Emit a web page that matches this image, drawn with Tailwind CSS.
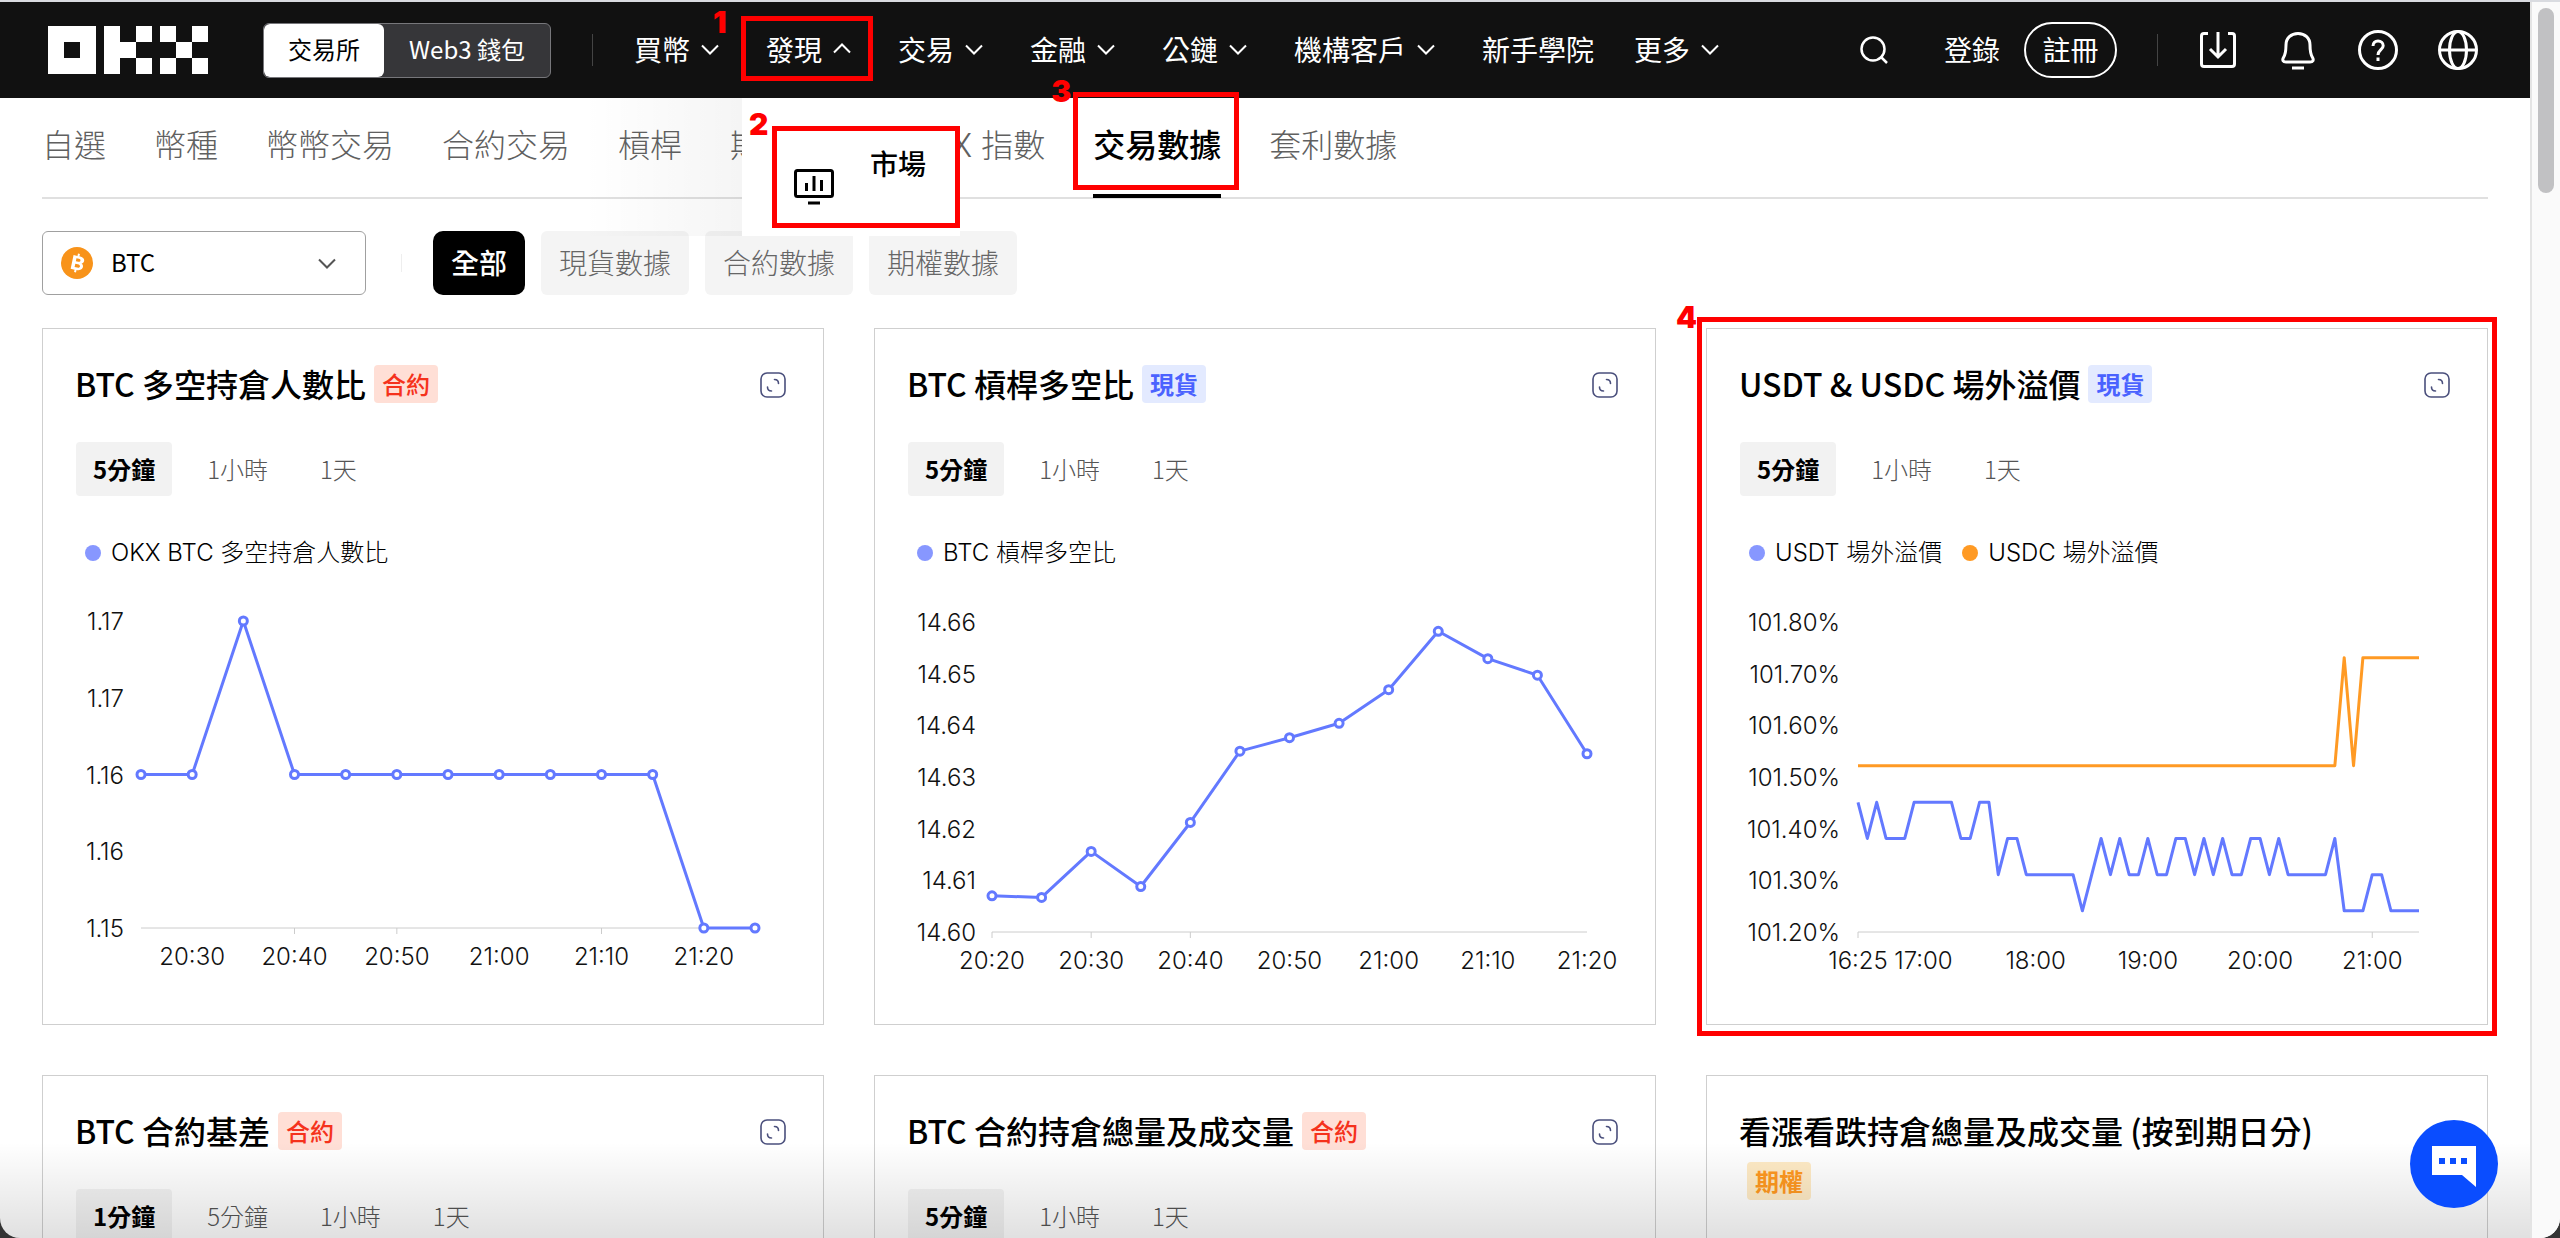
<!DOCTYPE html>
<html lang="zh-Hant">
<head>
<meta charset="utf-8">
<title>OKX 交易數據</title>
<script src="https://cdn.jsdelivr.net/npm/@tailwindcss/browser@4"></script>
</head>
<body class="bg-[#333] font-['Noto_Sans_CJK_TC',sans-serif] text-black">
<svg class="hidden" aria-hidden="true">
  <symbol id="down" viewBox="0 0 32 32"><path d="M8 12.500l8 8 8-8" fill="none" stroke="currentColor" stroke-width="2"/></symbol>
  <symbol id="expand" viewBox="0 0 26 26"><g fill="none" stroke="#4a4f7c" stroke-width="1.600" stroke-linecap="round"><rect x="1" y="1" width="24" height="24" rx="6"/><path d="M14.500 7.500c2.500 0 4 1.500 4 4M7.500 15c0 2.500 1.500 4 4 4"/></g></symbol>
</svg>
<div class="flex h-screen overflow-hidden rounded-b-[20px] border-t-2 border-[#d9dbe0] bg-white">
  <div class="relative min-w-0 flex-1 overflow-hidden">

    <header class="relative z-20 flex h-24 items-center bg-[#111] pl-12 pr-[52px] text-[28px] leading-10 text-white">
      <a href="#" aria-label="OKX" class="shrink-0">
        <svg class="h-12 w-40" viewBox="0 0 160 48" fill="#fff" shape-rendering="crispEdges"><path fill-rule="evenodd" d="M0 0h48v48H0zM16 16v16h16V16z"/><path d="M56 0h16v16h16v16H72v16H56zM88 0h16v16H88zM88 32h16v16H88zM112 0h16v16h-16zM144 0h16v16h-16zM128 16h16v16h-16zM112 32h16v16h-16zM144 32h16v16h-16z"/></svg>
      </a>
      <div class="ml-[55px] flex h-[55px] shrink-0 overflow-hidden rounded-md border border-[#77777b] bg-[#363639] text-2xl">
        <button class="w-[120px] rounded-md bg-white pb-0.5 text-black">交易所</button>
        <button class="w-[166px] pb-0.5">Web3 錢包</button>
      </div>
      <div class="ml-[41px] h-8 w-px shrink-0 bg-[#444]"></div>
      <nav class="ml-[41px] h-full">
        <ul class="flex h-full items-center gap-10 whitespace-nowrap pb-0.5">
          <li><a href="#" class="flex items-center gap-1">買幣<svg class="size-8"><use href="#down"/></svg></a></li>
          <li class="relative flex h-full items-center">
            <a href="#" class="flex items-center gap-1">發現<svg class="size-8 rotate-180"><use href="#down"/></svg></a>
            <div class="pointer-events-none absolute -left-[25px] -right-[15px] bottom-[15px] top-3.5 border-[5px] border-[#f00]"></div>
            <b class="absolute -left-[53px] top-0 font-['Inter',sans-serif] text-[30px] font-black text-[#f00]">1</b>
            <div class="absolute -left-6 top-24 h-[138px] w-[218px] bg-white text-black">
              <div class="absolute right-full top-0 h-full w-40 bg-gradient-to-r from-transparent to-black/4"></div>
              <b class="absolute left-[7px] top-1.5 font-['Inter',sans-serif] text-[30px] font-black text-[#f00]">2</b>
              <a href="#" class="ml-[30px] mt-7 flex h-[102px] items-center border-[5px] border-[#f00] pl-[17px] font-medium">
                <svg class="mt-5 h-9 w-10" viewBox="0 0 40 36" fill="none" stroke="#000" stroke-width="3"><rect x="1.500" y="1.500" width="37" height="26" rx="2"/><path d="M12.500 14v8M20 7v15M27.500 11v11M14 34h12"/></svg>
                <span class="-mt-7 ml-9">市場</span>
              </a>
            </div>
          </li>
          <li><a href="#" class="flex items-center gap-1">交易<svg class="size-8"><use href="#down"/></svg></a></li>
          <li><a href="#" class="flex items-center gap-1">金融<svg class="size-8"><use href="#down"/></svg></a></li>
          <li><a href="#" class="flex items-center gap-1">公鏈<svg class="size-8"><use href="#down"/></svg></a></li>
          <li><a href="#" class="flex items-center gap-1">機構客戶<svg class="size-8"><use href="#down"/></svg></a></li>
          <li><a href="#">新手學院</a></li>
          <li><a href="#" class="flex items-center gap-1">更多<svg class="size-8"><use href="#down"/></svg></a></li>
        </ul>
      </nav>
      <div class="ml-auto flex shrink-0 items-center">
        <button aria-label="搜尋"><svg class="size-7" viewBox="0 0 28 28" fill="none" stroke="#fff" stroke-width="2.500"><circle cx="13" cy="13" r="11.500"/><path d="M20.500 20.500L27 27"/></svg></button>
        <a href="#" class="ml-14 pb-0.5">登錄</a>
        <a href="#" class="ml-6 flex h-14 w-[93px] items-center justify-center rounded-full border-2 border-white pb-0.5">註冊</a>
        <div class="ml-10 h-8 w-px bg-[#444]"></div>
        <div class="ml-10 flex gap-10">
          <button aria-label="下載"><svg class="size-10" viewBox="0 0 40 40" fill="none" stroke="#fff" stroke-width="3"><path d="M10 3.500H6a2.500 2.500 0 0 0-2.500 2.500v28A2.500 2.500 0 0 0 6 36.500h28a2.500 2.500 0 0 0 2.500-2.500V6A2.500 2.500 0 0 0 34 3.500h-4M20 2v24M12 19l8 8 8-8"/></svg></button>
          <button aria-label="通知"><svg class="size-10" viewBox="0 0 40 40" fill="none" stroke="#fff" stroke-width="3"><path d="M8 32h24c3 0 4-2 2.500-4.500C33 25 32 22 32 15 32 8 27 3.500 20 3.500S8 8 8 15c0 7-1 10-2.500 12.500C4 30 5 32 8 32zM14 38h12"/></svg></button>
          <button aria-label="說明"><svg class="size-10" viewBox="0 0 40 40" fill="none" stroke="#fff" stroke-width="3"><circle cx="20" cy="20" r="18.500"/><path d="M15 16c0-3 2-5 5-5s5.200 2 5.200 4.700C25.200 19.500 20 20 20 25"/><path d="M20 27.500v3.500"/></svg></button>
          <button aria-label="語言"><svg class="size-10" viewBox="0 0 40 40" fill="none" stroke="#fff" stroke-width="3"><circle cx="20" cy="20" r="18.500"/><ellipse cx="20" cy="20" rx="8.500" ry="18.500"/><path d="M1.500 20h37"/></svg></button>
        </div>
      </div>
    </header>

    <main class="px-[42px]">
      <nav class="flex h-[101px] items-start gap-12 whitespace-nowrap border-b-2 border-[#e0e0e0] pt-[21px] text-[32px] font-light leading-[48px] text-[#606060]">
        <a href="#">自選</a><a href="#">幣種</a><a href="#">幣幣交易</a><a href="#">合約交易</a><a href="#">槓桿</a><a href="#">期權交易</a><a href="#"><span class="font-['Inter',sans-serif]">OKX </span>指數</a>
        <a href="#" class="relative z-30 h-[79px] border-b-4 border-black font-medium text-black">交易數據
          <span class="pointer-events-none absolute -left-5 -top-[27px] h-[98px] w-[166px] border-[5px] border-[#f00]"></span>
          <b class="absolute -left-[42px] -top-[52px] font-['Inter',sans-serif] text-[30px] font-black text-[#f00]">3</b>
        </a>
        <a href="#">套利數據</a>
      </nav>

      <div class="mt-8 flex h-16 items-center text-[28px] font-light text-[#666]">
        <div class="relative h-16 w-[324px] text-2xl font-normal text-black">
          <label for="coin" class="sr-only">幣種</label>
          <select id="coin" class="size-full appearance-none rounded-md border border-[#a0a0a0] bg-white pb-0.5 pl-[68px]"><option>BTC</option></select>
          <svg class="pointer-events-none absolute left-[19px] top-4 size-8" viewBox="0 0 32 32"><circle cx="16" cy="16" r="16" fill="#f8931a"/><path fill="#fff" fill-rule="evenodd" transform="rotate(12 16 16)" d="M11 9h4V6.500h2V9c7 0 6.500 5.500 3.500 6.500C24 17 23.500 23 17 23v2.500h-2V23h-4zM14.500 11.500v3H17c2.500 0 2.500-3 0-3zM14.500 17v3.500H17c3.500 0 3.500-3.500 0-3.500z"/></svg>
          <svg class="pointer-events-none absolute right-[23px] top-4 size-8 text-[#555]"><use href="#down"/></svg>
        </div>
        <div class="ml-[35px] h-[18px] w-px bg-[#eee]"></div>
        <div class="ml-[31px] flex gap-4">
          <button class="h-16 rounded-[10px] bg-black px-[18px] pb-0.5 font-medium text-white">全部</button>
          <button class="h-16 rounded-md bg-[#f4f4f4] px-[18px] pb-0.5">現貨數據</button>
          <button class="h-16 rounded-md bg-[#f4f4f4] px-[18px] pb-0.5">合約數據</button>
          <button class="h-16 rounded-md bg-[#f4f4f4] px-[18px] pb-0.5">期權數據</button>
        </div>
      </div>

      <div class="mt-[33px] grid grid-cols-3 gap-[50px]">
        <section class="border border-[#cfcfcf]">
          <div class="flex items-start gap-12 pl-8 pr-[37px] pt-[29px]">
            <h2 class="flex-1 text-[32px] font-medium leading-[50px]">BTC 多空持倉人數比<span class="ml-2 inline-block rounded-sm bg-[#ffdfd6] px-2 align-[3px] text-2xl font-medium leading-[38px] text-[#f5321c]">合約</span></h2>
            <button aria-label="放大" class="mt-3.5"><svg class="size-[26px]"><use href="#expand"/></svg></button>
          </div>
          <div class="mt-[34px] flex gap-[18px] pl-[33px] text-2xl font-light text-[#555]">
            <button class="h-[54px] rounded-sm bg-[#f2f2f2] px-[17px] font-bold text-black">5分鐘</button><button class="px-[17px]">1小時</button><button class="px-[17px]">1天</button>
          </div>
          <div class="mt-[41px] flex items-center gap-2.5 pl-[42px] font-['Inter','Noto_Sans_CJK_TC',sans-serif] text-2xl font-light leading-8"><i class="size-4 rounded-full bg-[#8797ff]"></i>OKX BTC 多空持倉人數比</div>
          <svg id="ratio" class="mt-5 block w-full font-['Inter',sans-serif] text-[24px] font-light" viewBox="0 0 780 435"></svg>
        </section>
        <section class="border border-[#cfcfcf]">
          <div class="flex items-start gap-12 pl-8 pr-[37px] pt-[29px]">
            <h2 class="flex-1 text-[32px] font-medium leading-[50px]">BTC 槓桿多空比<span class="ml-2 inline-block rounded-sm bg-[#e3eaff] px-2 align-[3px] text-2xl font-bold leading-[38px] text-[#4a62ff]">現貨</span></h2>
            <button aria-label="放大" class="mt-3.5"><svg class="size-[26px]"><use href="#expand"/></svg></button>
          </div>
          <div class="mt-[34px] flex gap-[18px] pl-[33px] text-2xl font-light text-[#555]">
            <button class="h-[54px] rounded-sm bg-[#f2f2f2] px-[17px] font-bold text-black">5分鐘</button><button class="px-[17px]">1小時</button><button class="px-[17px]">1天</button>
          </div>
          <div class="mt-[41px] flex items-center gap-2.5 pl-[42px] font-['Inter','Noto_Sans_CJK_TC',sans-serif] text-2xl font-light leading-8"><i class="size-4 rounded-full bg-[#8797ff]"></i>BTC 槓桿多空比</div>
          <svg id="margin" class="mt-5 block w-full font-['Inter',sans-serif] text-[24px] font-light" viewBox="0 0 780 435"></svg>
        </section>
        <section class="relative border border-[#cfcfcf]">
          <div class="pointer-events-none absolute -inset-x-[10px] -inset-y-3 border-[5px] border-[#f00]"></div>
          <b class="absolute -left-[31px] -top-8 font-['Inter',sans-serif] text-[30px] font-black leading-10 text-[#f00]">4</b>
          <div class="flex items-start gap-12 pl-8 pr-[37px] pt-[29px]">
            <h2 class="flex-1 text-[32px] font-medium leading-[50px]">USDT &amp; USDC 場外溢價<span class="ml-2 inline-block rounded-sm bg-[#e3eaff] px-2 align-[3px] text-2xl font-bold leading-[38px] text-[#4a62ff]">現貨</span></h2>
            <button aria-label="放大" class="mt-3.5"><svg class="size-[26px]"><use href="#expand"/></svg></button>
          </div>
          <div class="mt-[34px] flex gap-[18px] pl-[33px] text-2xl font-light text-[#555]">
            <button class="h-[54px] rounded-sm bg-[#f2f2f2] px-[17px] font-bold text-black">5分鐘</button><button class="px-[17px]">1小時</button><button class="px-[17px]">1天</button>
          </div>
          <div class="mt-[41px] flex items-center gap-2.5 pl-[42px] font-['Inter','Noto_Sans_CJK_TC',sans-serif] text-2xl font-light leading-8"><i class="size-4 rounded-full bg-[#8797ff]"></i>USDT 場外溢價<i class="ml-2.5 size-4 rounded-full bg-[#ff9a24]"></i>USDC 場外溢價</div>
          <svg id="premium" class="mt-5 block w-full font-['Inter',sans-serif] text-[24px] font-light" viewBox="0 0 780 435"></svg>
        </section>

        <section class="h-[697px] border border-[#cfcfcf]">
          <div class="flex items-start gap-12 pl-8 pr-[37px] pt-[29px]">
            <h2 class="flex-1 text-[32px] font-medium leading-[50px]">BTC 合約基差<span class="ml-2 inline-block rounded-sm bg-[#ffdfd6] px-2 align-[3px] text-2xl font-medium leading-[38px] text-[#f5321c]">合約</span></h2>
            <button aria-label="放大" class="mt-3.5"><svg class="size-[26px]"><use href="#expand"/></svg></button>
          </div>
          <div class="mt-[34px] flex gap-[18px] pl-[33px] text-2xl font-light text-[#555]">
            <button class="h-[54px] rounded-sm bg-[#f2f2f2] px-[17px] font-bold text-black">1分鐘</button><button class="px-[17px]">5分鐘</button><button class="px-[17px]">1小時</button><button class="px-[17px]">1天</button>
          </div>
        </section>
        <section class="h-[697px] border border-[#cfcfcf]">
          <div class="flex items-start gap-12 pl-8 pr-[37px] pt-[29px]">
            <h2 class="flex-1 text-[32px] font-medium leading-[50px]">BTC 合約持倉總量及成交量<span class="ml-2 inline-block rounded-sm bg-[#ffdfd6] px-2 align-[3px] text-2xl font-medium leading-[38px] text-[#f5321c]">合約</span></h2>
            <button aria-label="放大" class="mt-3.5"><svg class="size-[26px]"><use href="#expand"/></svg></button>
          </div>
          <div class="mt-[34px] flex gap-[18px] pl-[33px] text-2xl font-light text-[#555]">
            <button class="h-[54px] rounded-sm bg-[#f2f2f2] px-[17px] font-bold text-black">5分鐘</button><button class="px-[17px]">1小時</button><button class="px-[17px]">1天</button>
          </div>
        </section>
        <section class="h-[697px] border border-[#cfcfcf]">
          <div class="pl-8 pr-28 pt-[29px]">
            <h2 class="text-[32px] font-medium leading-[50px]">看漲看跌持倉總量及成交量 (按到期日分)<span class="ml-2 inline-block rounded-sm bg-[#ffebc6] px-2 align-[3px] text-2xl font-bold leading-[38px] text-[#ff9820]">期權</span></h2>
          </div>
        </section>
      </div>
    </main>

    <div class="pointer-events-none absolute inset-x-0 bottom-0 h-24 bg-gradient-to-b from-transparent to-black/12"></div>
    <button aria-label="客服" class="absolute bottom-[30px] right-8 z-30 size-[88px] rounded-full bg-[#0a4dff]">
      <svg class="size-[88px]" viewBox="0 0 88 88"><path fill="#fff" d="M22 26h44v41L52 55H22z"/><path fill="#0a4dff" d="M29 38h6v6h-6zM40 38h6v6h-6zM51 38h6v6h-6z"/></svg>
    </button>
  </div>
  <div class="w-[30px] shrink-0 border-l-2 border-[#e4e4e4] bg-[#fafafa] pl-1.5 pt-1.5"><div class="h-[185px] w-4 rounded-full bg-[#c1c1c3]"></div></div>
</div>
<script>
const BLUE = '#6379ff', ORANGE = '#ff9a24';

function drawChart(id, c) {
  const y = v => c.bottom - (v - c.min) / (c.max - c.min) * (c.bottom - c.top);
  const step = (c.right - c.left) / (c.series[0].values.length - 1);
  const x = i => c.left + i * step;
  let out = `<path d="M${c.left} ${c.bottom}H${c.right}${c.ticks.map(i => `M${x(i)} ${c.bottom}v6`).join('')}" stroke="#ccc" fill="none"/>`;
  c.yLabels.forEach((t, i) => {
    const ly = c.top + i * (c.bottom - c.top) / (c.yLabels.length - 1);
    out += `<text x="${c.labelEnd}" y="${ly + 9}" text-anchor="end" fill="#111">${t}</text>`;
  });
  c.xLabels.forEach(([t, i]) => {
    out += `<text x="${x(i)}" y="${c.bottom + 37}" text-anchor="middle" fill="#111">${t}</text>`;
  });
  c.series.forEach(s => {
    out += `<polyline points="${s.values.map((v, i) => `${x(i)},${y(v)}`).join(' ')}" fill="none" stroke="${s.color}" stroke-width="3" stroke-linejoin="round"/>`;
    if (c.dots) s.values.forEach((v, i) => { out += `<circle cx="${x(i)}" cy="${y(v)}" r="4" fill="#fff" stroke="${s.color}" stroke-width="3"/>`; });
  });
  document.getElementById(id).innerHTML = out;
}

drawChart('ratio', {
  left: 98, right: 712, top: 32, bottom: 339, labelEnd: 81, min: 1.15, max: 1.17, dots: true,
  yLabels: ['1.17', '1.17', '1.16', '1.16', '1.15'],
  xLabels: [['20:30', 1], ['20:40', 3], ['20:50', 5], ['21:00', 7], ['21:10', 9], ['21:20', 11]],
  ticks: [3, 5, 9],
  series: [{ color: BLUE, values: [1.16, 1.16, 1.17, 1.16, 1.16, 1.16, 1.16, 1.16, 1.16, 1.16, 1.16, 1.15, 1.15] }]
});
drawChart('margin', {
  left: 117, right: 712, top: 33, bottom: 343, labelEnd: 101, min: 14.60, max: 14.66, dots: true,
  yLabels: ['14.66', '14.65', '14.64', '14.63', '14.62', '14.61', '14.60'],
  xLabels: [['20:20', 0], ['20:30', 2], ['20:40', 4], ['20:50', 6], ['21:00', 8], ['21:10', 10], ['21:20', 12]],
  ticks: [0, 2, 4],
  series: [{ color: BLUE, values: [14.607, 14.6067, 14.6156, 14.6088, 14.6212, 14.635, 14.6376, 14.6404, 14.6469, 14.6582, 14.6529, 14.6497, 14.6345] }]
});
const level = { A: 101.451, B: 101.381, C: 101.311, D: 101.241 };
const usdc = Array(61).fill(101.522).map((v, i) => i === 52 || i > 53 ? 101.731 : v);
drawChart('premium', {
  left: 151, right: 712, top: 33, bottom: 343, labelEnd: 133, min: 101.2, max: 101.8,
  yLabels: ['101.80%', '101.70%', '101.60%', '101.50%', '101.40%', '101.30%', '101.20%'],
  xLabels: [['16:25', 0], ['17:00', 7], ['18:00', 19], ['19:00', 31], ['20:00', 43], ['21:00', 55]],
  ticks: [0, 55],
  series: [
    { color: BLUE, values: [...'ABABBBAAAAABBAACBBCCCCCCDCBCBCCBCCBBCBCBCCBBCBCCCCCBDDDCCDDDD'].map(k => level[k]) },
    { color: ORANGE, values: usdc }
  ]
});
</script>
</body>
</html>
